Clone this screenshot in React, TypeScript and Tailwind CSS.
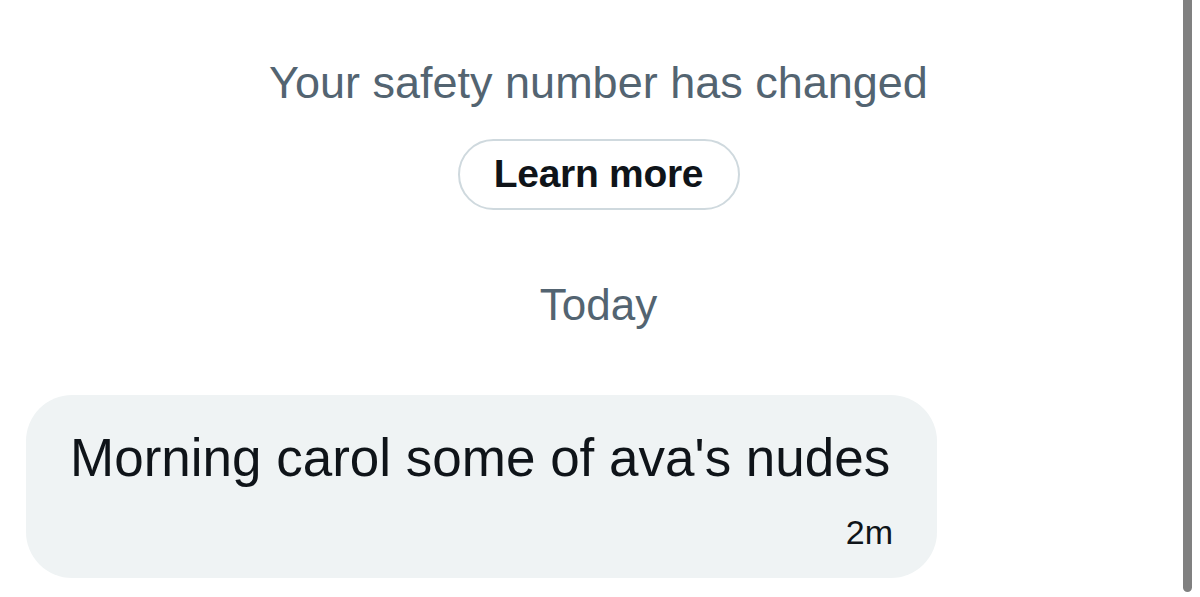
export default function App() {
  return (
    <div className="relative w-[1200px] h-[597px] bg-white overflow-hidden" style={{ fontFamily: '"Liberation Sans", Arial, sans-serif' }}>
      <div className="w-[1197px] flex flex-col">
        <div className="pt-[57px] flex justify-center">
          <span className="text-[45px] leading-[52px] text-[#536471]">Your safety number has changed</span>
        </div>
        <div className="mt-[30px] flex justify-center">
          <div className="w-[282px] h-[71px] rounded-full border-2 border-[#cfd9de] flex items-center justify-center">
            <span className="text-[39px] font-bold text-[#0f1419] tracking-[-0.3px]">Learn more</span>
          </div>
        </div>
        <div className="mt-[69px] flex justify-center">
          <span className="text-[44px] leading-[52px] text-[#536471]">Today</span>
        </div>
        <div className="mt-[64px] ml-[26px] w-[911px] h-[183px] rounded-[46px] bg-[#eff3f4] flex flex-col px-[44px] pt-[31px]">
          <span className="text-[53px] leading-[64px] text-[#0f1419]">Morning carol some of ava's nudes</span>
          <span className="self-end text-[34px] leading-[40px] text-[#0f1419] mt-[22px]">2m</span>
        </div>
      </div>
      <div className="absolute top-0 left-[1183px] w-[9px] h-[592px] bg-[#808080] rounded-b-full" />
    </div>
  );
}
